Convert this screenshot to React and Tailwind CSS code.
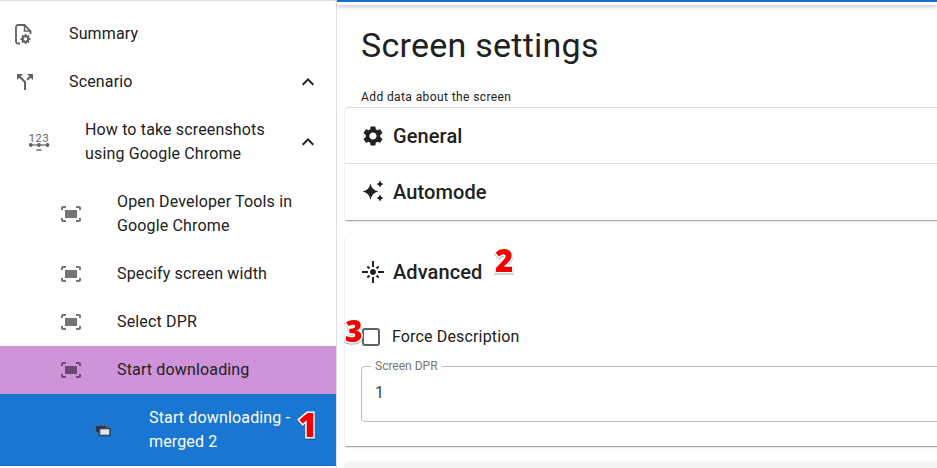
import React from "react";
import { MdExpandLess, MdFitScreen, MdSettings, MdFlare, MdCallSplit } from "react-icons/md";

const cardShadow = "shadow-[0_2px_1px_-1px_rgba(0,0,0,0.2),0_1px_1px_0_rgba(0,0,0,0.14),0_1px_3px_0_rgba(0,0,0,0.12)]";

function SummaryIcon() {
  return (
    <svg width="24" height="24" viewBox="0 0 24 24" fill="none" className="text-[#616161]">
      <path d="M7 21.500H5A2 2 0 0 1 3 19.500V5A2 2 0 0 1 5 3H11.500L17.500 9V12" stroke="currentColor" strokeWidth="1.800" />
      <path d="M11.500 3V9H17.500" stroke="currentColor" strokeWidth="1.500" />
      <circle cx="12.500" cy="17" r="2.800" stroke="currentColor" strokeWidth="2" />
      <path d="M12.500 12v2M12.500 20v2M7.500 17h2M15.500 17h2M9 13.500l1.400 1.400M14.600 19.100l1.400 1.400M9 20.500l1.400-1.400M14.600 14.900l1.400-1.400" stroke="currentColor" strokeWidth="1.800" />
    </svg>
  );
}

function NumbersIcon() {
  return (
    <svg width="24" height="24" viewBox="0 0 24 24" className="text-[#616161]">
      <text x="10" y="11.500" textAnchor="middle" fontSize="11" letterSpacing="0.6" fill="currentColor" fontFamily="Roboto, sans-serif">123</text>
      <path d="M1 15h18" stroke="currentColor" strokeWidth="1.200" />
      <circle cx="1.800" cy="15" r="1.900" fill="currentColor" />
      <circle cx="10" cy="15" r="1.900" fill="currentColor" />
      <circle cx="18.500" cy="15" r="1.900" fill="currentColor" />
      <path d="M7.500 20h5" stroke="currentColor" strokeWidth="1.400" />
    </svg>
  );
}

function MergedIcon() {
  return (
    <svg width="24" height="24" viewBox="0 0 24 24">
      <rect x="4.500" y="7.500" width="11" height="7" fill="#1a2f4d" stroke="#55657a" strokeWidth="1.400" />
      <rect x="8.500" y="10.500" width="10.500" height="7" fill="#dfe6ee" stroke="#33475f" strokeWidth="1.600" />
    </svg>
  );
}

function SparkleIcon() {
  return (
    <svg width="24" height="24" viewBox="0 0 24 24" fill="#212121">
      <path d="M9.500 3.500Q10.800 10.200 17.500 11.500Q10.800 12.800 9.500 20Q8.200 12.800 1.500 11.500Q8.200 10.200 9.500 3.500z" />
      <path d="M19 0.500Q19.700 3.300 22.500 4Q19.700 4.700 19 7.500Q18.300 4.700 15.500 4Q18.300 3.300 19 0.500z" />
      <path d="M19 14.500Q19.700 17.300 22.500 18Q19.700 18.700 19 21.500Q18.300 18.700 15.500 18Q18.300 17.300 19 14.500z" />
    </svg>
  );
}

function NavRow({ icon, indent, column, children, chevron, rowClass }) {
  return (
    <div className={"flex items-center py-3 pr-4 " + indent + " " + (rowClass || "text-[#212121]")}>
      <div className={"shrink-0 flex " + column}>{icon}</div>
      <div className="flex-1 text-base leading-6 tracking-[0.15px]">{children}</div>
      {chevron && <MdExpandLess className="text-[#212121] shrink-0" size={24} />}
    </div>
  );
}

function Mark({ className, children }) {
  return (
    <span
      className={
        "absolute font-extrabold leading-none text-[#f00000] [font-family:'Open_Sans',sans-serif] [-webkit-text-stroke:3px_white] [paint-order:stroke_fill] drop-shadow-[0_1px_0_rgba(0,0,0,0.35)] " +
        className
      }
    >
      {children}
    </span>
  );
}

export default function App() {
  const screen = <MdFitScreen size={24} className="text-[#757575]" />;
  return (
    <div className="relative w-[937px] h-[468px] overflow-hidden flex bg-white font-['Roboto',sans-serif] text-[#212121]">
      <aside className="w-[337px] shrink-0 border-r border-t border-[#e0e0e0] pt-[9px]">
        <NavRow icon={<SummaryIcon />} indent="pl-[13px]" column="w-14">Summary</NavRow>
        <NavRow icon={<MdCallSplit size={24} className="text-[#616161]" />} indent="pl-[13px]" column="w-14" chevron>Scenario</NavRow>
        <NavRow icon={<NumbersIcon />} indent="pl-[29px]" column="w-14" chevron>
          How to take screenshots
          <br />
          using Google Chrome
        </NavRow>
        <NavRow icon={screen} indent="pl-[59px]" column="w-[58px]">
          Open Developer Tools in
          <br />
          Google Chrome
        </NavRow>
        <NavRow icon={screen} indent="pl-[59px]" column="w-[58px]">Specify screen width</NavRow>
        <NavRow icon={screen} indent="pl-[59px]" column="w-[58px]">Select DPR</NavRow>
        <div className="bg-[#ce93d8]">
          <NavRow icon={<MdFitScreen size={24} className="text-[#6a4a72]" />} indent="pl-[59px]" column="w-[58px]">Start downloading</NavRow>
        </div>
        <div className="bg-[#1976d2]">
          <NavRow icon={<MergedIcon />} indent="pl-[91px]" column="w-[58px]" rowClass="text-white">
            Start downloading -
            <br />
            merged 2
          </NavRow>
        </div>
      </aside>

      <main className="flex-1 min-w-0 border-t-2 border-[#1976d2]">
        <div className="h-1 -mt-px shadow-[0_1px_5px_rgba(0,0,0,0.3)]"></div>
        <div className="pl-2">
          <div className="pl-4">
            <h1 className="text-[34px] leading-[42px] mt-[19px] font-normal tracking-[0.25px]">Screen settings</h1>
            <p className="mt-[21px] text-xs leading-5 tracking-[0.4px]">Add data about the screen</p>
          </div>
          <section className={"w-[640px] border-t border-[#e0e0e0] rounded-t " + cardShadow}>
            <div className="flex items-center gap-2 h-[55px] pl-4">
              <MdSettings size={24} className="text-[#212121]" />
              <span className="text-xl font-medium tracking-[0.1px]">General</span>
            </div>
            <div className="flex items-center gap-2 h-[57px] pl-4 border-t border-[#e0e0e0]">
              <SparkleIcon />
              <span className="text-xl font-medium tracking-[0.1px]">Automode</span>
            </div>
          </section>
          <section className={"w-[640px] h-[210px] mt-4 pt-[22px] pl-4 rounded-t " + cardShadow}>
            <div className="flex items-center gap-2">
              <MdFlare size={24} className="text-[#212121]" />
              <span className="text-xl font-medium tracking-[0.1px]">Advanced</span>
            </div>
            <label className="flex items-center mt-[39px] h-6">
              <span className="w-[18px] h-[18px] ml-px border-2 border-[#616161] rounded-[3px]"></span>
              <span className="ml-3 text-base tracking-[0.15px]">Force Description</span>
            </label>
            <fieldset className="mt-[9px] h-[64px] border border-[#bdbdbd] rounded pl-[9px]">
              <legend className="px-1 text-xs leading-4 text-[#757575]">Screen DPR</legend>
              <div className="text-base leading-6 mt-[7px] ml-1 text-[#37474f]">1</div>
            </fieldset>
          </section>
          <section className="w-[640px] h-10 mt-4 rounded-t bg-[#f5f5f5] shadow-[0_1px_3px_0_rgba(0,0,0,0.12)]"></section>
        </div>
      </main>

      <Mark className="left-[298px] top-[408px] text-[33px]">1</Mark>
      <Mark className="left-[495px] top-[245px] text-[31px]">2</Mark>
      <Mark className="left-[345px] top-[316px] text-[30px]">3</Mark>
    </div>
  );
}
